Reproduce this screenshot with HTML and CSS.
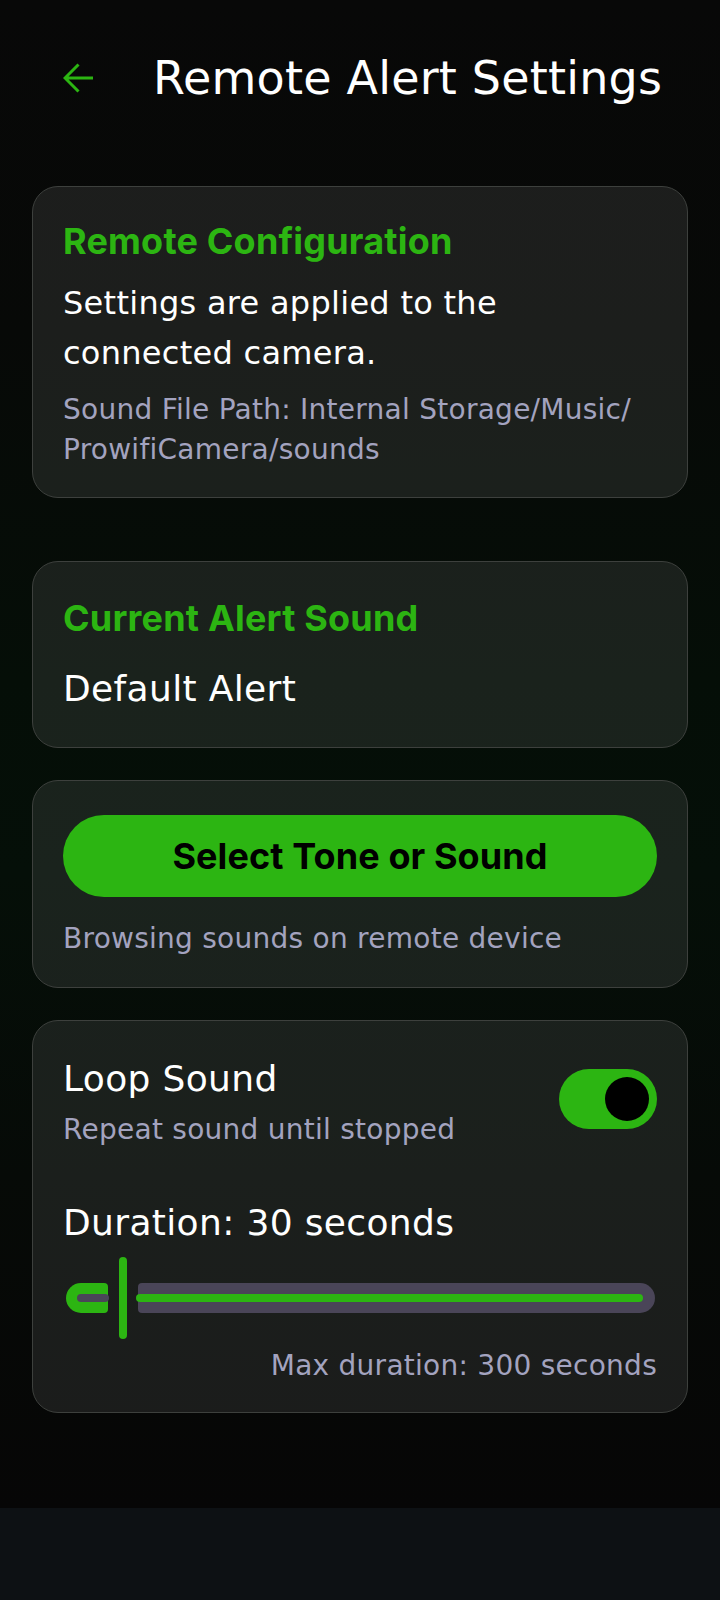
FILE: index.html
```html
<!DOCTYPE html>
<html lang="en">
<head>
<meta charset="utf-8">
<title>Remote Alert Settings</title>
<link rel="stylesheet" href="styles.css">
</head>
<body>
<div class="screen">
  <header class="topbar">
    <span class="back" aria-label="Back">
      <svg viewBox="0 0 30 30" width="30" height="30"><path d="M30 15H2.5M15.5 1.5L2 15l13.5 13.5" fill="none" stroke="#2cb512" stroke-width="3" stroke-linecap="butt" stroke-linejoin="miter"/></svg>
    </span>
    <h1 class="title">Remote Alert Settings</h1>
  </header>

  <main class="content">
    <section class="card card-info">
      <h2 class="card-heading">Remote Configuration</h2>
      <p class="body-text">Settings are applied to the<br>connected camera.</p>
      <p class="hint hint-path">Sound File Path: Internal Storage/Music/<br>ProwifiCamera/sounds</p>
    </section>

    <section class="card card-current">
      <h2 class="card-heading">Current Alert Sound</h2>
      <p class="value-text">Default Alert</p>
    </section>

    <section class="card card-select">
      <button class="primary-btn">Select Tone or Sound</button>
      <p class="hint hint-browse">Browsing sounds on remote device</p>
    </section>

    <section class="card card-loop">
      <div class="loop-row">
        <div class="loop-text">
          <p class="value-text">Loop Sound</p>
          <p class="hint hint-loop">Repeat sound until stopped</p>
        </div>
        <span class="switch"><span class="switch-thumb"></span></span>
      </div>
      <p class="value-text duration">Duration: 30 seconds</p>
      <div class="slider">
        <span class="track-active"></span>
        <span class="slider-thumb"></span>
        <span class="track-inactive"></span>
      </div>
      <p class="hint hint-max">Max duration: 300 seconds</p>
    </section>
  </main>
</div>
<div class="navbar"></div>
</body>
</html>
```

FILE: styles.css
```css
* { box-sizing: border-box; }

html, body {
  margin: 0;
  padding: 0;
}

body {
  width: 720px;
  height: 1600px;
  overflow: hidden;
  background: #060606;
  font-family: "DejaVu Sans", "Liberation Sans", sans-serif;
  color: #ffffff;
}

.screen {
  height: 1508px;
  background: linear-gradient(180deg, #080808 0%, #070907 22%, #050e07 45%, #050f08 58%, #060a07 78%, #060606 100%);
  display: flex;
  flex-direction: column;
}

.navbar {
  height: 92px;
  background: #0d1114;
}

.topbar {
  display: flex;
  align-items: center;
  height: 56px;
  margin-top: 50px;
  padding-left: 63px;
}

.back {
  width: 30px;
  height: 30px;
  display: flex;
}

.title {
  margin: 0 0 0 60px;
  font-family: "DejaVu Sans", sans-serif;
  font-weight: 400;
  font-size: 46px;
  line-height: 56px;
  letter-spacing: 0.2px;
  color: #ffffff;
  white-space: nowrap;
}

.content {
  display: flex;
  flex-direction: column;
  padding: 0 32px;
  margin-top: 80px;
}

.card {
  background: rgba(255, 255, 255, 0.085);
  border: 1.5px solid #3d403d;
  border-radius: 26px;
  padding: 32px 30px 27px 30px;
}

.card + .card { margin-top: 32px; }
.card-info + .card-current { margin-top: 63px; }

.card-heading {
  margin: 0;
  font-family: "Inter", "Open Sans", sans-serif;
  font-weight: 700;
  font-size: 36px;
  line-height: 44px;
  color: #2cb512;
  letter-spacing: 0.2px;
}

.body-text {
  margin: 15px 0 0 0;
  font-size: 32px;
  line-height: 50px;
  letter-spacing: 0.28px;
  color: #ffffff;
}

.hint {
  margin: 0;
  font-size: 28px;
  line-height: 40px;
  letter-spacing: 0.26px;
  color: #a3a3bf;
}

.hint-path { margin-top: 12px; }

.value-text {
  margin: 0;
  font-size: 36px;
  line-height: 48px;
  letter-spacing: 0.35px;
  color: #ffffff;
}

.card-current { padding-top: 34px; padding-bottom: 34.5px; }
.card-current .value-text { margin-top: 24.5px; }

.card-select { padding-top: 34px; padding-bottom: 28px; }

.primary-btn {
  display: flex;
  align-items: center;
  justify-content: center;
  width: 100%;
  height: 82px;
  border: none;
  border-radius: 41px;
  background: #2cb512;
  color: #000000;
  font-family: "Inter", "Open Sans", sans-serif;
  font-weight: 700;
  font-size: 36px;
  line-height: 44px;
  letter-spacing: 0.1px;
  padding: 0;
}

.hint-browse { margin-top: 22px; }

.card-loop { padding-top: 34px; padding-bottom: 26px; }

.loop-row {
  display: flex;
  align-items: center;
  justify-content: space-between;
}

.hint-loop { margin-top: 6.5px; }

.switch {
  width: 98px;
  height: 60px;
  border-radius: 30px;
  background: #2cb512;
  display: flex;
  align-items: center;
  justify-content: flex-end;
  padding-right: 8px;
  margin-top: -7px;
}

.switch-thumb {
  width: 44px;
  height: 44px;
  border-radius: 50%;
  background: #000000;
}

.duration { margin-top: 49px; }

.slider {
  margin: 10px 2.5px 0 2.5px;
  height: 82px;
  display: flex;
  align-items: center;
}

.track-active {
  position: relative;
  width: 42px;
  height: 30px;
  background: #2cb512;
  border-radius: 15px 4px 4px 15px;
}

.track-active::after {
  content: "";
  position: absolute;
  left: 11px;
  right: -1px;
  top: 11px;
  height: 8px;
  border-radius: 4px;
  background: #4a4558;
}

.slider-thumb {
  width: 8px;
  height: 82px;
  margin: 0 11px;
  border-radius: 4px;
  background: #2cb512;
}

.track-inactive {
  position: relative;
  flex: 1;
  height: 30px;
  background: #4a4558;
  border-radius: 4px 15px 15px 4px;
}

.track-inactive::after {
  content: "";
  position: absolute;
  left: -2px;
  right: 12px;
  top: 11px;
  height: 8px;
  border-radius: 4px;
  background: #2cb512;
}

.hint-max {
  margin-top: 7px;
  text-align: right;
}
```
